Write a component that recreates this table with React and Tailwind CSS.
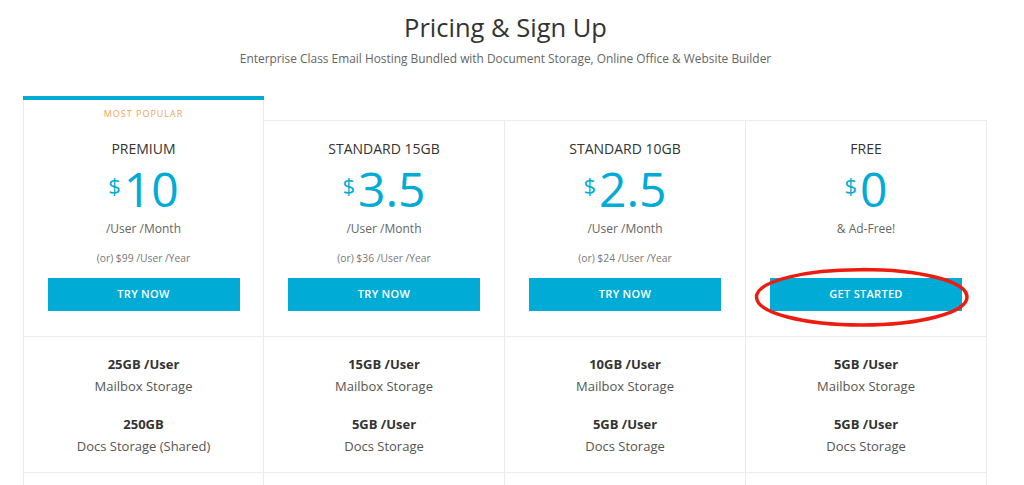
import React from "react";

const plans = [
  {
    name: "PREMIUM",
    price: "10",
    per: "/User /Month",
    yearly: "(or) $99 /User /Year",
    cta: "TRY NOW",
    popular: true,
    mailbox: "25GB /User",
    docs: "250GB",
    docsLabel: "Docs Storage (Shared)",
  },
  {
    name: "STANDARD 15GB",
    price: "3.5",
    per: "/User /Month",
    yearly: "(or) $36 /User /Year",
    cta: "TRY NOW",
    mailbox: "15GB /User",
    docs: "5GB /User",
    docsLabel: "Docs Storage",
  },
  {
    name: "STANDARD 10GB",
    price: "2.5",
    per: "/User /Month",
    yearly: "(or) $24 /User /Year",
    cta: "TRY NOW",
    mailbox: "10GB /User",
    docs: "5GB /User",
    docsLabel: "Docs Storage",
  },
  {
    name: "FREE",
    price: "0",
    per: "& Ad-Free!",
    yearly: "",
    cta: "GET STARTED",
    circled: true,
    mailbox: "5GB /User",
    docs: "5GB /User",
    docsLabel: "Docs Storage",
  },
];

function PlanColumn({ plan, first }) {
  return (
    <div
      className={`w-[241px] shrink-0 border-r border-[#ebebeb] flex flex-col ${
        first ? "border-l" : "mt-[24px]"
      }`}
    >
      {plan.popular ? (
        <>
          <div className="h-[4px] -mx-px bg-[#00acd6]" />
          <div className="h-[21px] pt-[8px] text-center text-[9px] leading-[12px] tracking-[1px] text-[#eea55a]">
            MOST POPULAR
          </div>
        </>
      ) : (
        <div className="h-px -mr-px bg-[#ebebeb]" />
      )}

      {/* header */}
      <div className="pt-[18px] pb-[25px] flex flex-col items-center border-b border-[#ebebeb]">
        <div className="text-[14px] leading-5 text-[#333]">{plan.name}</div>
        <div className="mt-[6px] flex items-start text-[#00acd6]">
          <span className="text-[22px] leading-none mt-[9px] mr-[3px]">$</span>
          <span className="text-[48px] leading-[48px]">{plan.price}</span>
        </div>
        <div className="mt-[8px] text-[12px] leading-4 text-[#666]">
          {plan.per}
        </div>
        <div className="mt-[14px] h-[14px] text-[10.3px] leading-[14px] text-[#777]">
          {plan.yearly}
        </div>
        <div className="relative mt-[13px]">
          <button className="w-[192px] h-[33px] bg-[#00acd6] text-white text-[11px] font-semibold tracking-[0.3px]">
            {plan.cta}
          </button>
          {plan.circled && (
            <svg
              className="absolute left-[-16px] top-[-11px] pointer-events-none"
              width="216"
              height="61"
              viewBox="0 0 216 61"
            >
              <path
                d="M108 2.5 C 165 2.5, 213 14, 213 30 C 213 46, 165 58, 108 58 C 50 58, 2.5 46, 2.5 30 C 2.5 14, 52 2, 112 2.8"
                fill="none"
                stroke="#ec1c10"
                strokeWidth="3.5"
                strokeLinecap="round"
              />
            </svg>
          )}
        </div>
      </div>

      {/* features */}
      <div className="pt-[16px] pb-[15px] flex flex-col items-center text-[13px] leading-[22px] border-b border-[#ebebeb]">
        <div className="font-bold text-[#333]">{plan.mailbox}</div>
        <div className="text-[#555]">Mailbox Storage</div>
        <div className="mt-[16px] font-bold text-[#333]">{plan.docs}</div>
        <div className="text-[#555]">{plan.docsLabel}</div>
      </div>
      <div className="h-[60px]" />
    </div>
  );
}

export default function App() {
  return (
    <div
      className="w-[1024px] h-[485px] overflow-hidden bg-white"
      style={{ fontFamily: '"Open Sans", "Noto Sans", sans-serif' }}
    >
      <div className="w-[965px] ml-[23px]">
        <div className="pt-[9px] text-center">
          <h1 className="text-[25.5px] leading-[36px] text-[#333]">
            Pricing &amp; Sign Up
          </h1>
          <p className="mt-[5px] text-[11.9px] leading-[16px] text-[#666]">
            Enterprise Class Email Hosting Bundled with Document Storage, Online
            Office &amp; Website Builder
          </p>
        </div>
        <div className="mt-[30px] flex items-start">
          {plans.map((plan, i) => (
            <PlanColumn key={plan.name} plan={plan} first={i === 0} />
          ))}
        </div>
      </div>
    </div>
  );
}
